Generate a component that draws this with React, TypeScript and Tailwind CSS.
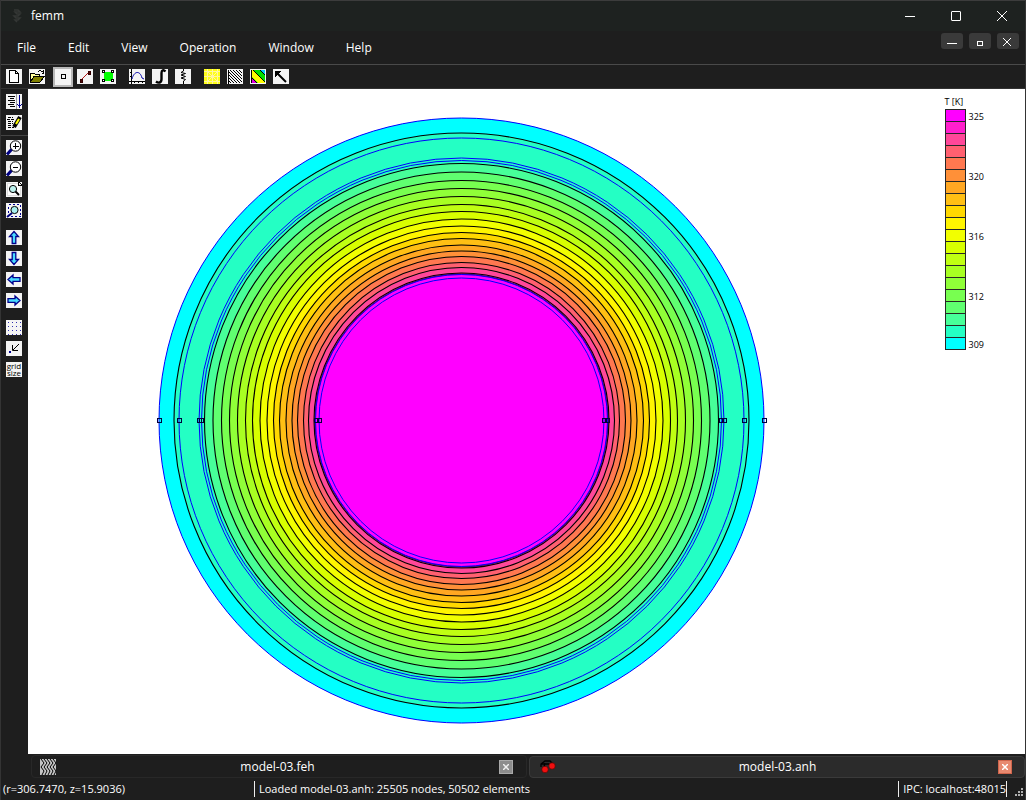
import type { ReactNode } from "react";

const CX = 433.5;
const CY = 331.5;

// Temperature scale, hottest first
const SCALE = [
  "#ff00ff", "#ff1fcc", "#ff4799", "#ff6070", "#ff7850", "#ff9038", "#ffa722",
  "#ffbf14", "#ffd800", "#fff500", "#f2ff00", "#d8ff00", "#c0ff12", "#a8ff22",
  "#90ff38", "#78ff50", "#60ff70", "#47ff99", "#24ffc4", "#00ffff",
];

const CONTOURS = [
  287.5, 257, 248.5, 240, 232, 224, 216, 209, 201.5, 194.5, 188, 182, 175.5,
  169.5, 164, 158, 153, 147.5, 146.5,
];
const BOUNDARIES = [302.5, 282.5, 262.5, 260, 146, 142.5];
const NODES = [302.5, 282.5, 262.5, 260, 145.5, 142.5];
const LABELS: Record<number, string> = { 0: "325", 5: "320", 10: "316", 15: "312", 19: "309" };

function Pic({ children, bg = "#f4f4f4" }: { children?: ReactNode; bg?: string }) {
  return (
    <svg width="16" height="15" viewBox="0 0 16 15" shapeRendering="crispEdges" aria-hidden="true" fill="none" stroke="#000">
      <rect width="16" height="15" fill={bg} stroke="none" />
      {children}
    </svg>
  );
}

function Tool({ label, children, pressed = false }: { label: string; children: ReactNode; pressed?: boolean }) {
  return (
    <button
      type="button"
      aria-label={label}
      aria-pressed={pressed}
      className={
        pressed
          ? "flex h-5 w-5 shrink-0 items-center justify-center border-2 border-[#b8b8b8] bg-[#f4f4f4]"
          : "flex h-[15px] w-4 shrink-0"
      }
    >
      {children}
    </button>
  );
}

const Arrow = ({ turn }: { turn: number }) => (
  <Pic>
    <g transform={`rotate(${turn} 8 7.5)`} shapeRendering="auto">
      <path d="M8 1.5 L12.5 6.5 H9.8 V13.5 H6.2 V6.5 H3.5 Z" fill="#48dcff" stroke="#00008c" strokeWidth="1.3" />
    </g>
  </Pic>
);

const Lens = ({ sign }: { sign: string }) => (
  <Pic>
    <path d="M1 14.5 L6 9" stroke="#000080" strokeWidth="3" shapeRendering="auto" />
    <circle cx="9.5" cy="6" r="5.2" fill="#fff" shapeRendering="auto" />
    <path d={sign} strokeWidth="1" />
  </Pic>
);

function TopTools() {
  return (
    <div role="toolbar" aria-label="Main" className="flex h-6 items-center border-b border-[#333] pl-[5px]">
      <div className="flex items-center gap-[7px]">
        <Tool label="New"><Pic><path d="M3.5 1.5 H9.5 L12.5 4.5 V13.5 H3.5 Z M9.5 1.5 V4.5 H12.5" fill="#fff" /></Pic></Tool>
        <Tool label="Open">
          <Pic>
            <path d="M1.5 12.5 V4.5 H5.5 L6.5 5.5 H10.5 V7.5" fill="#ffff9c" />
            <path d="M1.5 13 L5 7.5 H15.5 L11 13 Z" fill="#808000" />
            <path d="M9 2.5 H10 M10 1.5 H12 M12 2.5 H14 M13 4.5 H15 M14.5 1 V5" />
          </Pic>
        </Tool>
      </div>
      <div className="ml-2 flex items-center gap-1">
        <Tool label="Operate on points" pressed><Pic><rect x="6.5" y="5.5" width="4" height="4" /></Pic></Tool>
        <div className="flex items-center gap-[7px]">
          <Tool label="Operate on contours"><Pic><path d="M3 12 L12 3" stroke="#b01818" shapeRendering="auto" /><path d="M3 10h2v3h-2z M11 2h2v3h-2z" fill="#500808" stroke="#300" /></Pic></Tool>
          <Tool label="Operate on areas"><Pic><rect x="4" y="3" width="9" height="9" fill="#00ff00" stroke="none" /><path d="M2.5 1.5h2v2h-2z M11.5 1.5h2v2h-2z M2.5 10.5h2v2h-2z M11.5 10.5h2v2h-2z" fill="#fff" /></Pic></Tool>
        </div>
      </div>
      <div className="ml-[13px] flex items-center gap-[7px]">
        <Tool label="Plot"><Pic><path d="M2.5 0 V15 M0 12.5 H16 M5.5 12 V14 M9.5 12 V14 M13.5 12 V14 M1 3.5 H3 M1 7.5 H3" /><path d="M3 10 C5 2 11 1 13 9 L15 10" stroke="#0000a8" shapeRendering="auto" /></Pic></Tool>
        <Tool label="Integrate"><Pic><path d="M13.5 2.5 C11.5 0.5 9.5 1 9.5 4 V10 C9.5 14 6.5 14.5 4 12.5" strokeWidth="2.4" shapeRendering="auto" /></Pic></Tool>
        <Tool label="Circuit properties"><Pic><path d="M8.5 0V2L6 3.5L10.5 4.5L6 6L10.5 7.5L6 9L10.5 10.5L8.5 12V15" shapeRendering="auto" /></Pic></Tool>
      </div>
      <div className="ml-[13px] flex items-center gap-[7px]">
        <Tool label="Show mesh"><Pic bg="#ffff18"><path d="M0 2.5H16M0 7.5H16M0 12.5H16M3.5 0V15M8.5 0V15M13.5 0V15M3 2L14 13M3 13L14 2" stroke="#fff5a0" /></Pic></Tool>
        <Tool label="Contour plot"><Pic><path d="M1 11L4 14M1 8L7 14M1 5L10 14M1 2L13 14M3 1L15 13M6 1L15 10M9 1L15 7M12 1L15 4M1.5 1V15" /></Pic></Tool>
        <Tool label="Density plot">
          <Pic>
            <g stroke="none" shapeRendering="auto">
              <path d="M1 1H15V14H1Z" fill="#00e000" />
              <path d="M10 1H15V6Z" fill="#00cfff" />
              <path d="M1 1H3L15 13V14H8L1 7Z" fill="#ffff00" />
              <path d="M4 1H10L15 6V13Z" fill="#00e000" />
              <path d="M1 8L7 14H1Z" fill="#e000e0" />
            </g>
            <path d="M3 1L15 13M10 1L15 6M1 8L7 14M1.5 1V14" shapeRendering="auto" />
          </Pic>
        </Tool>
        <Tool label="Vector plot"><Pic><path d="M3 3L13 13" strokeWidth="2" shapeRendering="auto" /><path d="M2 2H8L2 8Z" fill="#000" stroke="none" /></Pic></Tool>
      </div>
    </div>
  );
}

function SideTools() {
  return (
    <div role="toolbar" aria-label="View" className="flex w-7 shrink-0 flex-col gap-3 pt-[5px]">
      <div className="flex flex-col">
        <div className="flex flex-col gap-[6px] border-b border-[#444] pb-[5px] pl-[5px]">
          <Tool label="Output window"><Pic><path d="M2 2.5H9M4 4.5H8M2 6.5H9M4 8.5H9M2 10.5H8M4 12.5H9" /><path d="M10.5 0V15" stroke="#999" /><path d="M13.5 1V13M11.5 10L13.5 13L15.5 10" stroke="#000090" /></Pic></Tool>
          <Tool label="Properties"><Pic><path d="M2 2.5H7M1 4.5H9M2 6.5H7M2 8.5H7M2 10.5H5M2 12.5H8" strokeDasharray="3 1" /><path d="M14 2L8 12" strokeWidth="4" shapeRendering="auto" /><path d="M13 4L10 9" stroke="#ffff00" strokeWidth="2" shapeRendering="auto" /></Pic></Tool>
        </div>
        <div className="flex flex-col gap-[6px] pl-[5px] pt-1">
          <Tool label="Zoom in"><Lens sign="M9.5 3V9M6.5 6.5H12.5" /></Tool>
          <Tool label="Zoom out"><Lens sign="M7 6.5H12" /></Tool>
          <Tool label="Zoom to fit"><Pic><path d="M1.5 1.5H12L14.5 4V13.5H1.5Z" stroke="#ddd" fill="#fff" /><path d="M12.5 0V3.5H16M13 0L16 3" /><circle cx="7" cy="7" r="3.6" fill="#bdf2ee" shapeRendering="auto" /><path d="M9.5 9.5L13 13" strokeWidth="2" shapeRendering="auto" /></Pic></Tool>
          <Tool label="Zoom window"><Pic><rect x="2.5" y="1.5" width="12" height="12" stroke="#000090" strokeDasharray="2 2" /><circle cx="8.5" cy="7" r="3.6" fill="#a8f0f0" shapeRendering="auto" /><path d="M1 14L6 10" stroke="#000080" strokeWidth="2" shapeRendering="auto" /></Pic></Tool>
        </div>
      </div>
      <div className="flex flex-col gap-[6px] pl-[5px]">
        <Tool label="Pan up"><Arrow turn={0} /></Tool>
        <Tool label="Pan down"><Arrow turn={180} /></Tool>
        <Tool label="Pan left"><Arrow turn={270} /></Tool>
        <Tool label="Pan right"><Arrow turn={90} /></Tool>
      </div>
      <div className="flex flex-col gap-[6px] pl-[5px]">
        <Tool label="Show grid"><Pic><path d="M1 2.5H16M1 6.5H16M1 10.5H16M1 14.5H16" stroke="#3030b0" strokeDasharray="1 3" strokeDashoffset="-1" /></Pic></Tool>
        <Tool label="Snap to grid"><Pic><path d="M13 3L7 9M6.5 4V9.5H12" shapeRendering="auto" /><path d="M3 10h2v2h-2z" fill="#000090" stroke="none" /></Pic></Tool>
        <Tool label="Set grid size">
          <span className="block h-[15px] w-4 bg-[#f4f4f4] text-center text-[8px] leading-[7px] text-black">grid size</span>
        </Tool>
      </div>
    </div>
  );
}

function Field() {
  return (
    <svg width="764" height="665" viewBox="0 0 764 665" className="shrink-0" role="img" aria-label="Temperature density plot">
      <circle cx={CX} cy={CY} r={302.5} fill="#00ffff" />
      {CONTOURS.map((r, i) => (
        <circle key={r} cx={CX} cy={CY} r={r} fill={SCALE[18 - i]} stroke="#000" strokeWidth={i === 18 ? 0.7 : 1.1} />
      ))}
      {BOUNDARIES.map((r) => (
        <circle key={r} cx={CX} cy={CY} r={r} fill="none" stroke="#0000ff" strokeWidth="1" />
      ))}
      {NODES.flatMap((r) => [CX - r, CX + r]).map((x) => (
        <rect key={x} x={Math.floor(x) - 1.5} y={329.5} width="4" height="4" fill="none" stroke="#00003c" shapeRendering="crispEdges" />
      ))}
    </svg>
  );
}

function Legend() {
  return (
    <div className="mr-[41px] mt-[7px] shrink-0 text-[9px] leading-3 text-black">
      <div>T [K]</div>
      <div className="mt-px flex flex-col">
        {SCALE.map((c, i) => (
          <div key={c} className="flex h-3">
            <div className={i === 19 ? "h-[13px] w-[21px] border border-[#262626]" : "h-[13px] w-[21px] border border-b-0 border-[#262626]"} style={{ backgroundColor: c }} />
            <span className="ml-[3px] mt-[2px]">{LABELS[i]}</span>
          </div>
        ))}
      </div>
    </div>
  );
}

const CAPTION = "flex h-full w-[46px] items-center justify-center";
const CHILD = "flex h-4 w-[22px] items-center justify-center rounded-[3px] bg-[#3a3a3a]";

export default function App() {
  return (
    <div className="flex h-screen flex-col border-x border-[#343434] bg-[#1e1e1e] font-['Open_Sans','Noto_Sans',sans-serif] text-xs text-white">
      <header className="flex h-[31px] shrink-0 items-center border-t border-[#3c3c3c] bg-[#1e2220]">
        <svg width="16" height="16" viewBox="0 0 16 16" className="ml-2 mr-[6px]" fill="none" stroke="#343735" aria-hidden="true">
          <path d="M5 2H9L11 4H6L8 6H11L9 8H5L7 10H11L9 12H6L8 14" strokeWidth="1.5" />
        </svg>
        <span className="flex-1">femm</span>
        <button type="button" aria-label="Minimize" className={CAPTION}><svg width="10" height="10" stroke="#fff"><path d="M0 5.5H10" /></svg></button>
        <button type="button" aria-label="Maximize" className={CAPTION}><svg width="10" height="10" fill="none" stroke="#fff"><rect x="0.5" y="0.5" width="9" height="9" rx="0.5" /></svg></button>
        <button type="button" aria-label="Close" className={CAPTION}><svg width="10" height="10" stroke="#fff"><path d="M0 0L10 10M10 0L0 10" /></svg></button>
      </header>
      <div className="flex h-[34px] shrink-0 items-start justify-between border-b border-[#4a4a4a]">
        <nav className="flex h-full items-center gap-8 pl-4">
          {["File", "Edit", "View", "Operation", "Window", "Help"].map((m) => (
            <button key={m} type="button">{m}</button>
          ))}
        </nav>
        <div className="mr-[6px] mt-[2px] flex gap-[6px]">
          <button type="button" aria-label="Minimize document" className={CHILD}><svg width="10" height="10" stroke="#fff"><path d="M0 7.5H10" /></svg></button>
          <button type="button" aria-label="Restore document" className={CHILD}><svg width="10" height="10" fill="none" stroke="#fff"><rect x="2.5" y="5.5" width="5" height="4" /></svg></button>
          <button type="button" aria-label="Close document" className={CHILD}><svg width="10" height="10" stroke="#fff"><path d="M0 2L8 10M8 2L0 10" /></svg></button>
        </div>
      </div>
      <TopTools />
      <div className="flex min-h-0 flex-1">
        <SideTools />
        <main className="-ml-px flex min-w-0 flex-1 items-start justify-between bg-white">
          <Field />
          <Legend />
        </main>
      </div>
      <div role="tablist" className="flex h-6 shrink-0 gap-[2px] pl-[30px] pt-px">
        <div className="flex flex-1 items-center rounded-sm border border-[#282828] pl-2 pr-[13px]">
          <svg width="16" height="16" viewBox="0 0 16 16" fill="none" stroke="#000" aria-hidden="true">
            <rect width="16" height="16" fill="#c4c4c4" stroke="none" />
            <path d="M1 0L4 4L1 8L4 12L2 16M4 0L7 4L4 8L7 12L5 16M7 0L10 4L7 8L10 12L8 16M10 0L13 4L10 8L13 12L11 16M13 0L16 4L13 8L16 12L14 16" />
          </svg>
          <button type="button" role="tab" aria-selected={false} className="flex-1">model-03.feh</button>
          <button type="button" aria-label="Close model-03.feh" className="flex h-[14px] w-[14px] items-center justify-center border border-[#aaa] bg-[#8c8c8c]"><svg width="6" height="6" stroke="#eee" strokeWidth="1.5"><path d="M0 0L6 6M6 0L0 6" /></svg></button>
        </div>
        <div className="mt-px flex flex-1 items-center rounded-sm border border-[#3a3a3a] bg-[#2b2b2b] pl-[9px] pr-3">
          <svg width="18" height="16" viewBox="0 0 18 16" aria-hidden="true">
            <path d="M2 8V5L6 2H11L14 5M6 4L5 8M2 5H12" stroke="#000" strokeWidth="1.3" fill="none" />
            <circle cx="6" cy="10.5" r="3.2" fill="#f01010" stroke="#500" strokeWidth="0.6" />
            <circle cx="13" cy="7" r="3.2" fill="#f01010" stroke="#500" strokeWidth="0.6" />
          </svg>
          <button type="button" role="tab" aria-selected className="flex-1">model-03.anh</button>
          <button type="button" aria-label="Close model-03.anh" className="flex h-[14px] w-[14px] items-center justify-center border border-[#d0654c] bg-[#e88a70]"><svg width="6" height="6" stroke="#fff" strokeWidth="1.5"><path d="M0 0L6 6M6 0L0 6" /></svg></button>
        </div>
      </div>
      <footer className="flex h-[22px] shrink-0 items-center text-[11px] leading-4">
        <span className="w-[253px] pl-[2px]">(r=306.7470, z=15.9036)</span>
        <span className="flex-1 border-l border-[#eee] pl-1">Loaded model-03.anh: 25505 nodes, 50502 elements</span>
        <span className="whitespace-nowrap border-x border-[#eee] pl-1">IPC: localhost:48015</span>
        <svg width="18" height="22" fill="#b0b0b0" aria-hidden="true"><path d="M14 10h2v2h-2z M11 13h2v2h-2z M14 13h2v2h-2z M8 16h2v2h-2z M11 16h2v2h-2z M14 16h2v2h-2z" /></svg>
      </footer>
    </div>
  );
}
